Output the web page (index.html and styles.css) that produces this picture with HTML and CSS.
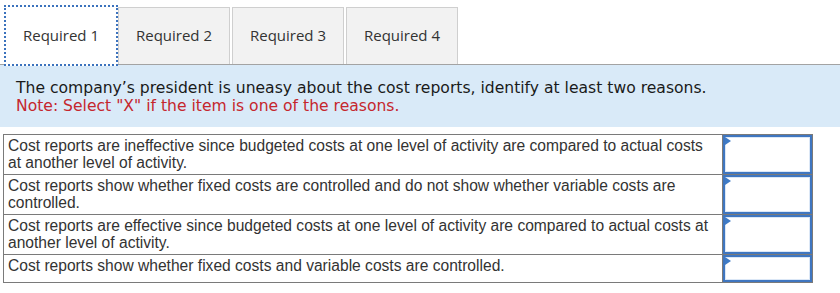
FILE: index.html
```html
<!DOCTYPE html>
<html>
<head>
<meta charset="utf-8">
<link rel="stylesheet" href="styles.css">
</head>
<body>
<div class="page">
  <div class="tabs">
    <div class="tab active">Required 1</div>
    <div class="tab">Required 2</div>
    <div class="tab">Required 3</div>
    <div class="tab">Required 4</div>
  </div>
  <div class="prompt">
    <div class="q">The company’s president is uneasy about the cost reports, identify at least two reasons.</div>
    <div class="note">Note: Select "X" if the item is one of the reasons.</div>
  </div>
  <table class="grid">
    <tr>
      <td class="label">Cost reports are ineffective since budgeted costs at one level of activity are compared to actual costs at another level of activity.</td>
      <td class="input"><span class="flag"></span></td>
    </tr>
    <tr>
      <td class="label">Cost reports show whether fixed costs are controlled and do not show whether variable costs are controlled.</td>
      <td class="input"><span class="flag"></span></td>
    </tr>
    <tr>
      <td class="label">Cost reports are effective since budgeted costs at one level of activity are compared to actual costs at another level of activity.</td>
      <td class="input"><span class="flag"></span></td>
    </tr>
    <tr>
      <td class="label">Cost reports show whether fixed costs and variable costs are controlled.</td>
      <td class="input"><span class="flag"></span></td>
    </tr>
  </table>
</div>
</body>
</html>
```

FILE: styles.css
```css
html, body {
  margin: 0;
  padding: 0;
  background: #ffffff;
}

.page {
  width: 840px;
}

.tabs {
  display: flex;
  align-items: flex-end;
  padding: 5px 0 0 4px;
  border-bottom: 1px solid #a3a3a3;
}

.tab {
  box-sizing: border-box;
  width: 112px;
  height: 57px;
  margin-left: 2px;
  padding-bottom: 3px;
  background: #f2f2f2;
  border: 1px solid #cfcfcf;
  border-bottom: none;
  display: flex;
  align-items: center;
  justify-content: center;
  font-family: "Open Sans", "DejaVu Sans", sans-serif;
  font-size: 15px;
  color: #333333;
}

.tab.active {
  position: relative;
  z-index: 1;
  width: 114px;
  height: 61px;
  margin-left: 0;
  margin-right: -2px;
  margin-bottom: -2px;
  padding-bottom: 2px;
  background: #ffffff;
  border: 2px dotted #3b72bd;
}

.prompt {
  background: #d9eaf8;
  padding: 14px 16px 12px;
  font-family: "DejaVu Sans", Verdana, sans-serif;
  font-size: 15.6px;
  line-height: 18px;
  color: #1a1a1a;
}

.note {
  color: #c5262d;
}

.grid {
  margin: 7px 0 0 3px;
  width: 810px;
  border-collapse: collapse;
  font-family: "Liberation Sans", Arial, sans-serif;
  font-size: 15.6px;
  line-height: 17px;
  color: #333333;
}

.grid td {
  border: 1px solid #7a7a7a;
  vertical-align: top;
}

.label {
  padding: 2px 3px 3px 4px;
  width: 711px;
}

.input {
  position: relative;
  height: 27px;
  padding: 0;
  box-shadow: inset 0 0 0 2px #3f76c0, inset 0 0 0 3px #dbe7f6;
  background: #ffffff;
}

.flag {
  position: absolute;
  left: 2px;
  top: 2px;
  width: 0;
  height: 0;
  border-top: 4px solid transparent;
  border-bottom: 4px solid transparent;
  border-left: 6px solid #3f7bc6;
}
```
